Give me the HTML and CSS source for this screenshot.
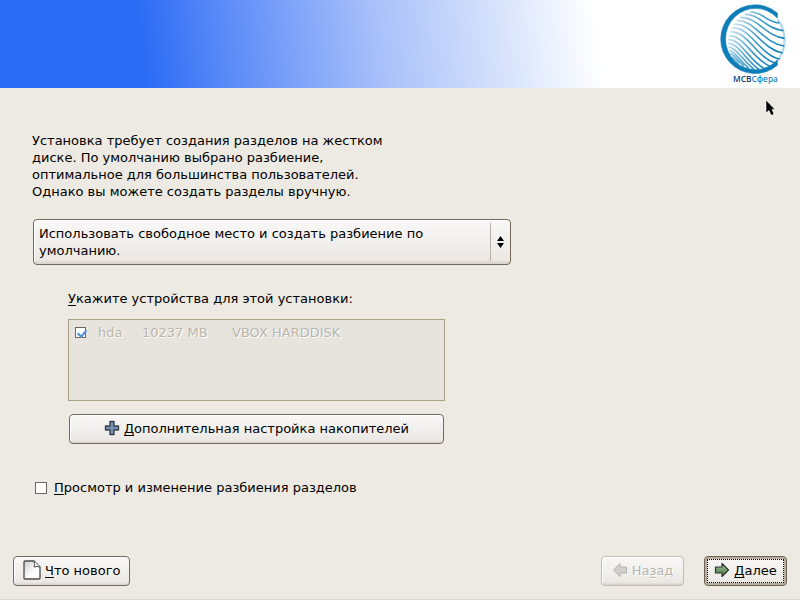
FILE: index.html
```
<!DOCTYPE html>
<html lang="ru">

<head>
    <meta charset="UTF-8" />
    <meta name="viewport" content="width=device-width, initial-scale=1.0" />
    <title>МСВСфера</title>
    <link rel="stylesheet" href="styles.css">
</head>

<body>
    <header class="banner">
        <svg class="logo" viewBox="60 0 204 264" role="img" aria-label="МСВСфера">
            <defs>
                <linearGradient id="stripe" gradientUnits="userSpaceOnUse" x1="85" y1="90" x2="225" y2="150">
                    <stop offset="0" stop-color="#1584bb" stop-opacity="0.15" />
                    <stop offset="0.5" stop-color="#1584bb" stop-opacity="0.75" />
                    <stop offset="1" stop-color="#1584bb" />
                </linearGradient>
            </defs>
            <path d="M233 58 A104 104 0 0 1 233 182" fill="none" stroke="#b5d9eb" stroke-width="7" />
            <path d="M232 39 A103 103 0 1 0 232 196 L232 180 A90 92 0 1 1 232 54 Z" fill="#0d7db8" stroke="#0d7db8" stroke-width="2" />
            <g fill="none" stroke="url(#stripe)" stroke-width="5">
                <path d="M150 36 C186 34 198 66 238 69" />
                <path d="M134 43 C180 42 198 88 250 92" />
                <path d="M120 52 C174 50 194 108 254 115" />
                <path d="M110 62 C162 58 190 130 253 138" />
                <path d="M101 73 C156 66 184 148 248 159" />
                <path d="M94 84 C148 76 180 166 239 177" />
                <path d="M89 96 C140 88 168 172 227 190" />
                <path d="M86 108 C130 102 158 178 212 200" />
                <path d="M84 119 C121 114 148 184 194 206" />
                <path d="M84 130 C114 128 140 184 177 208" />
                <path d="M85 141 C109 141 130 184 161 207" />
                <path d="M87 151 C105 153 121 184 146 204" />
                <path d="M90 161 C103 163 114 182 132 198" />
                <path d="M95 171 C102 173 108 181 117 190" />
            </g>
            <text class="logo-text" x="99" y="247"><tspan fill="#173a75">МСВ</tspan><tspan fill="#1b86c0">Сфера</tspan></text>
        </svg>
    </header>

    <form class="installer">
        <main class="content">
            <p class="intro">Установка требует создания разделов на жестком диске. По умолчанию выбрано разбиение, оптимальное для большинства пользователей. Однако вы можете создать разделы вручную.</p>

            <div class="select-box">
                <select class="layout-select" aria-label="Способ разбиения">
                    <option>Использовать свободное место и создать разбиение по умолчанию.</option>
                </select>
                <svg class="select-arrows" viewBox="0 0 7 12" aria-hidden="true">
                    <path d="M3.5 0 L7 5 H0 Z M0 7 H7 L3.5 12 Z" />
                </svg>
            </div>

            <section class="devices">
                <h2 class="devices-title" id="devicesTitle"><u>У</u>кажите устройства для этой установки:</h2>
                <div class="device-list" role="group" aria-labelledby="devicesTitle">
                    <label class="device">
                        <input class="check check-small" type="checkbox" name="hda" checked disabled />
                        <span class="device-name">hda</span>
                        <span class="device-size">10237 MB</span>
                        <span>VBOX HARDDISK</span>
                    </label>
                </div>
                <button class="btn btn-wide" type="button">
                    <svg class="icon" viewBox="0 0 16 16" aria-hidden="true">
                        <path d="M6 1.5 H10 V6 H14.5 V10 H10 V14.5 H6 V10 H1.5 V6 H6 Z" fill="#7290b3" stroke="#3b4148" stroke-width="1.4" stroke-linejoin="round" />
                    </svg>
                    <span><u>Д</u>ополнительная настройка накопителей</span>
                </button>
            </section>

            <label class="review">
                <input class="check" type="checkbox" name="review" />
                <span><u>П</u>росмотр и изменение разбиения разделов</span>
            </label>
        </main>

        <footer class="actions">
            <button class="btn btn-notes" type="button">
                <svg class="icon-page" viewBox="0 0 18 20" aria-hidden="true">
                    <defs>
                        <linearGradient id="paper" x1="0" y1="0" x2="1" y2="1">
                            <stop offset="0" stop-color="#ccc" />
                            <stop offset="0.6" stop-color="#fff" />
                        </linearGradient>
                    </defs>
                    <path d="M2 1 H11 L17 7 V18 Q17 19 16 19 H2 Q1 19 1 18 V2 Q1 1 2 1 Z" fill="url(#paper)" stroke="#4b4b4b" stroke-width="1.3" />
                    <path d="M11 1 Q12 5 11 7 Q14 6 17 7" fill="#fff" stroke="#4b4b4b" />
                </svg>
                <span><u>Ч</u>то нового</span>
            </button>
            <button class="btn btn-step btn-back" type="button" disabled>
                <svg class="icon" viewBox="0 0 16 16" aria-hidden="true">
                    <path d="M1.5 8 L8 1.5 V5 H14.5 V11 H8 V14.5 Z" fill="#d2d0cc" stroke="#b3b1ac" stroke-linejoin="round" />
                </svg>
                <span>На<u>з</u>ад</span>
            </button>
            <button class="btn btn-step btn-next" type="submit">
                <svg class="icon" viewBox="0 0 16 16" aria-hidden="true">
                    <defs>
                        <linearGradient id="green" x1="0" y1="0" x2="0" y2="1">
                            <stop offset="0" stop-color="#a5c69d" />
                            <stop offset="1" stop-color="#3f7241" />
                        </linearGradient>
                    </defs>
                    <path d="M14.5 8 L8 1.5 V5 H1.5 V11 H8 V14.5 Z" fill="url(#green)" stroke="#2e3530" stroke-width="1.2" stroke-linejoin="round" />
                </svg>
                <span><u>Д</u>алее</span>
            </button>
        </footer>
    </form>

    <svg class="pointer" viewBox="0 0 11 17" aria-hidden="true">
        <path d="M1 1 V14 L4 11.5 L6 16 H8.5 V14 L7 10.5 H10 Z" fill="#000" stroke="#fff" stroke-width="0.6" />
    </svg>
</body>

</html>
```
FILE: styles.css
```
* {
    box-sizing: border-box;
}

body {
    margin: 0;
    min-height: 100vh;
    display: flex;
    flex-direction: column;
    background: #edeae3;
    color: #000;
    font: 13px/17px "DejaVu Sans", sans-serif;
}

.banner {
    display: flex;
    justify-content: flex-end;
    padding-right: 12px;
    background: linear-gradient(83deg, #2b6bf5 145px, #5b8bf8 230px, #a8c0fa 380px, #d6e2fc 500px, #fff 600px);
}

.logo {
    width: 68px;
    height: 88px;
}

.logo-text {
    font: 600 25px "Open Sans", sans-serif;
}

.installer {
    flex: 1;
    display: flex;
    flex-direction: column;
    border-bottom: 1px solid #d9d7d2;
}

.content {
    flex: 1;
    padding: 44px 33px 0;
}

.intro {
    max-width: 370px;
    margin: 0 0 19px -1px;
}

u {
    text-decoration: underline;
    text-decoration-thickness: 1px;
    text-underline-offset: 2px;
    text-decoration-skip-ink: none;
}

/* shared look of raised controls */
.btn,
.layout-select {
    border: 1px solid #746a5c;
    border-radius: 4px;
    background: linear-gradient(#f9f8f7, #f0eeeb 60%, #ebe8e4 90%, #d9d1c9);
    box-shadow: inset 1px 1px 0 #fff;
    color: #000;
    font: inherit;
}

.select-box {
    position: relative;
    max-width: 478px;
}

.layout-select {
    display: block;
    width: 100%;
    min-height: 46px;
    padding: 5px 48px 5px 5px;
    appearance: none;
    white-space: normal;
    text-wrap: wrap;
}

.select-arrows {
    position: absolute;
    top: 4px;
    right: 0;
    width: 21px;
    height: 38px;
    padding: 13px 7px 13px 6px;
    border-left: 1px solid #b5b0a8;
    pointer-events: none;
}

.devices {
    max-width: 377px;
    margin: 25px 0 35px 35px;
}

.devices-title {
    margin: 0 0 12px;
    font: inherit;
}

.device-list {
    min-height: 82px;
    margin-bottom: 13px;
    padding: 4px 6px;
    border: 1px solid #aca085;
    background: #e7e4dd;
}

.device {
    display: flex;
    align-items: center;
    color: #b8b5ad;
    text-shadow: 1px 1px 0 #fff;
}

.device-name {
    width: 44px;
    margin-left: 12px;
}

.device-size {
    width: 90px;
}

.check {
    appearance: none;
    width: 12px;
    height: 12px;
    margin: 0;
    border: 1px solid #6f675b;
    background: #fff;
}

.check-small {
    width: 11px;
    height: 11px;
}

.check:checked::before {
    content: "";
    display: block;
    width: 4px;
    height: 7px;
    margin-left: 3px;
    border: solid #4a90d9;
    border-width: 0 2px 2px 0;
    transform: rotate(38deg);
}

.btn {
    display: flex;
    align-items: center;
    justify-content: center;
    gap: 4px;
    height: 30px;
    padding: 0 9px 2px;
}

.btn-wide {
    width: calc(100% - 2px);
    margin-left: 1px;
}

.icon {
    width: 16px;
    height: 16px;
}

.icon-page {
    width: 18px;
    height: 20px;
}

.review {
    display: inline-flex;
    align-items: center;
    gap: 7px;
    margin-left: 2px;
}

.actions {
    display: flex;
    gap: 20px;
    padding: 0 13px 13px;
}

.btn-notes {
    margin-right: auto;
}

.btn-step {
    width: 83px;
    padding: 0 0 2px;
}

.btn-back {
    border-color: #c5bcae;
    color: #b8b5ad;
    text-shadow: 1px 1px 0 #fff;
}

.btn-next {
    border-color: #6b6256;
    box-shadow: inset 0 0 0 2px #b9ad9e;
    outline: 1px dotted #000;
    outline-offset: -4px;
}

.pointer {
    position: absolute;
    top: 99px;
    right: 24px;
    width: 11px;
    height: 17px;
}
```
